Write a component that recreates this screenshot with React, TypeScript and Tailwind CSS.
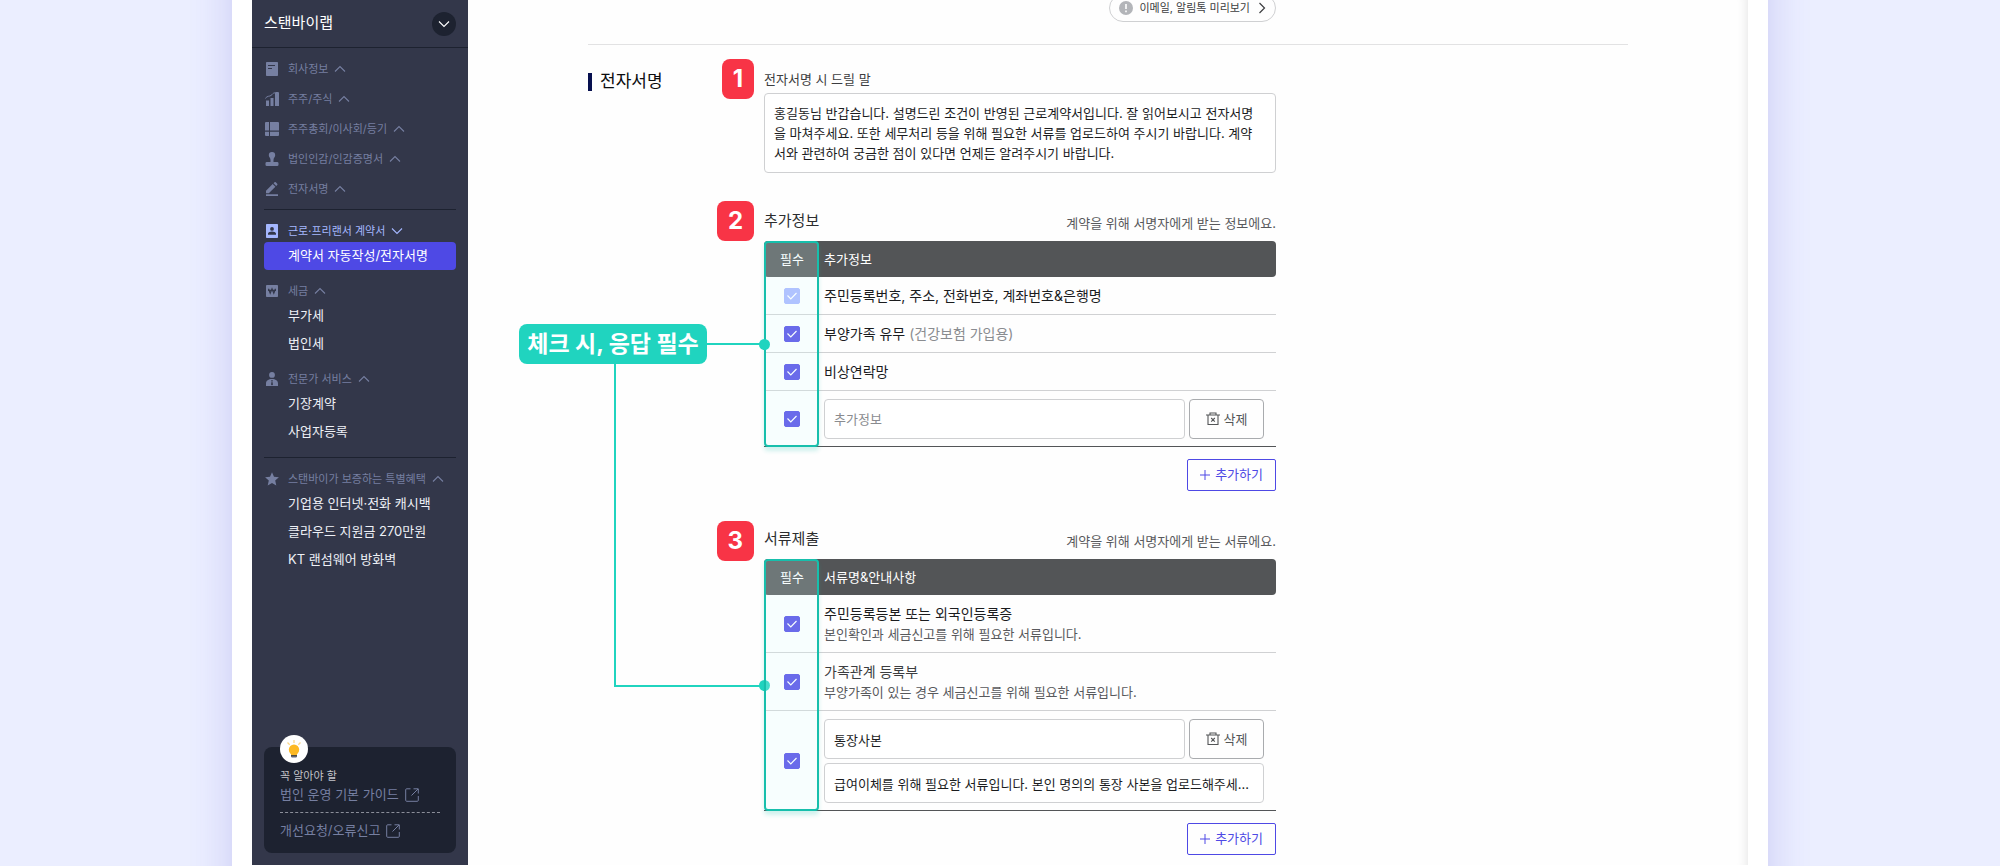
import { useState, type ReactNode } from "react"

function Chevron({ up = false }: { up?: boolean }) {
  return (
    <svg className="h-2 w-3 shrink-0" viewBox="0 0 12 8" fill="none" stroke="currentColor" strokeWidth={1.1} aria-hidden="true">
      <path d={up ? "M1 6.5 6 1.5 11 6.5" : "M1 1.5 6 6.5 11 1.5"} />
    </svg>
  )
}

function MenuIcon({ children }: { children: ReactNode }) {
  return (
    <svg className="h-3.5 w-3.5 shrink-0" viewBox="0 0 14 14" fill="currentColor" aria-hidden="true">
      {children}
    </svg>
  )
}

const icons = {
  company: <path fillRule="evenodd" d="M1.8 0h10.4a.8.8 0 0 1 .8.8v12.4a.8.8 0 0 1-.8.8H1.8a.8.8 0 0 1-.8-.8V.8a.8.8 0 0 1 .8-.8ZM3 3v1.1h7V3H3Zm0 3v1.1h4V6H3Z" />,
  stock: (
    <>
      <path d="M1 8.5h3V14H1zM5.5 6h3v8h-3zM10 1a1 1 0 0 1 1-1h2a1 1 0 0 1 1 1v13h-4z" />
      <path d="M.3 6.4C2.5 3.5 4.5 4.6 6 3.5S7.7 1 10 .8" fill="none" stroke="currentColor" />
    </>
  ),
  meeting: <path d="M1 0h3v8.5H0V1a1 1 0 0 1 1-1ZM5 0h8a1 1 0 0 1 1 1v7.5H5zM0 9.7h4V14H1a1 1 0 0 1-1-1zM5 9.700h9V13a1 1 0 0 1-1 1H5z" />,
  stamp: <path d="M7 0a3.2 3.2 0 0 1 3.2 3.2c0 1.9-1.7 2.5-1.7 4.8V10h3.700a1.300 1.300 0 0 1 1.300 1.300v1.400a1.300 1.300 0 0 1-1.300 1.300H1.800a1.300 1.300 0 0 1-1.300-1.300v-1.400A1.300 1.300 0 0 1 1.800 10h3.700V8c0-2.300-1.700-2.900-1.700-4.800A3.200 3.200 0 0 1 7 0Z" />,
  sign: <path d="M1 12.200h12V14H1zM1 8.700 7.700 2l2.700 2.700-6.600 6.600H1zM8.500 1.200 9.500.3a1 1 0 0 1 1.300 0l1.400 1.400a1 1 0 0 1 0 1.300l-1 .9z" />,
  contract: <path fillRule="evenodd" d="M1.800 0h10.400a.8.8 0 0 1 .8.8v12.400a.8.8 0 0 1-.8.8H1.800a.8.8 0 0 1-.8-.8V.8a.8.8 0 0 1 .8-.8ZM7 3a1.900 1.900 0 1 0 0 3.800A1.900 1.900 0 0 0 7 3ZM3 10.800h8V9.600c0-1.300-2.200-2.200-4-2.200s-4 .9-4 2.200z" />,
  tax: (
    <>
      <rect x="1" y="1" width="12" height="12" rx=".8" />
      <path d="m3.500 4.700 1.700 4.500L7 4.900l1.800 4.300 1.700-4.500M3 6.400h8" fill="none" stroke="#33374a" strokeWidth="1.2" />
    </>
  ),
  expert: <path fillRule="evenodd" d="M7 0a2.900 2.900 0 1 1 0 5.800A2.900 2.900 0 0 1 7 0ZM1 14v-2.500C1 8.500 3.500 7 7 7s6 1.500 6 4.500V14zm5.200-6 .5 1.300L6 12.500l1 1 1-1-.7-3.200.5-1.300z" />,
  star: <path d="m7 .3 2 4.500 4.900.5-3.700 3.300 1.100 4.900L7 11l-4.300 2.500 1.100-4.900L.1 5.300 5 4.800z" />,
}

function MenuHeading({ icon, active = false, children }: { icon: keyof typeof icons; active?: boolean; children: ReactNode }) {
  return (
    <button
      type="button"
      className={
        active
          ? "flex h-[22px] w-full items-center text-[11px] text-[#a5b7ff]"
          : "flex h-[22px] w-full items-center text-[11px] text-[#767fa1]"
      }
    >
      <span className="mr-2 ml-px flex">
        <MenuIcon>{icons[icon]}</MenuIcon>
      </span>
      <span className="mr-1.5 ml-px whitespace-nowrap">{children}</span>
      <Chevron up={!active} />
    </button>
  )
}

function MenuItem({ active = false, children }: { active?: boolean; children: ReactNode }) {
  return (
    <a
      href="#"
      className={
        active
          ? "flex h-7 items-center rounded bg-[#4e49e5] pl-6 text-[13px] whitespace-nowrap text-white"
          : "flex h-7 items-center rounded pl-6 text-[13px] whitespace-nowrap text-[#eef0f6]"
      }
    >
      {children}
    </a>
  )
}

function ExternalIcon() {
  return (
    <svg className="h-3.5 w-3.5" viewBox="0 0 14 14" fill="none" stroke="currentColor" aria-hidden="true">
      <path d="M5.500.8H1.700a1 1 0 0 0-1 1v10.500a1 1 0 0 0 1 1h10.600a1 1 0 0 0 1-1V8M8.500.8h4.800v4.700M13 1 6.500 7.500" />
    </svg>
  )
}

function Sidebar() {
  return (
    <aside className="flex w-[216px] shrink-0 flex-col bg-[#33374a]">
      <div className="flex h-12 items-center justify-between border-b border-[#1d2230] px-3">
        <strong className="text-[15px] font-normal text-white">스탠바이랩</strong>
        <button type="button" aria-label="회사 선택" className="flex h-6 w-6 items-center justify-center rounded-full bg-[#1d2230] text-white">
          <Chevron />
        </button>
      </div>

      <nav className="px-3 pt-2.5">
        <div className="space-y-2 border-b border-[#1d2230] pb-[9px]">
          <MenuHeading icon="company">회사정보</MenuHeading>
          <MenuHeading icon="stock">주주/주식</MenuHeading>
          <MenuHeading icon="meeting">주주총회/이사회/등기</MenuHeading>
          <MenuHeading icon="stamp">법인인감/인감증명서</MenuHeading>
          <MenuHeading icon="sign">전자서명</MenuHeading>
        </div>
        <div className="space-y-2.5 border-b border-[#1d2230] pt-2.5 pb-[11px]">
          <div>
            <MenuHeading icon="contract" active>근로·프리랜서 계약서</MenuHeading>
            <MenuItem active>계약서 자동작성/전자서명</MenuItem>
          </div>
          <div>
            <MenuHeading icon="tax">세금</MenuHeading>
            <MenuItem>부가세</MenuItem>
            <MenuItem>법인세</MenuItem>
          </div>
          <div>
            <MenuHeading icon="expert">전문가 서비스</MenuHeading>
            <MenuItem>기장계약</MenuItem>
            <MenuItem>사업자등록</MenuItem>
          </div>
        </div>
        <div className="pt-2.5">
          <MenuHeading icon="star">스탠바이가 보증하는 특별혜택</MenuHeading>
          <MenuItem>기업용 인터넷·전화 캐시백</MenuItem>
          <MenuItem>클라우드 지원금 270만원</MenuItem>
          <MenuItem>KT 랜섬웨어 방화벽</MenuItem>
        </div>
      </nav>

      {/* Guide box */}
      <div className="relative mx-3 mt-auto mb-3 rounded-lg bg-[#1d2230] px-4 pt-[21px] pb-2.5 text-[13px] text-[#767fa1]">
        <span className="absolute -top-3 left-4 flex h-7 w-7 items-center justify-center rounded-full bg-white">
          <svg className="h-5 w-4" viewBox="0 0 16 20" aria-hidden="true">
            <g stroke="#fbd78a" strokeWidth="1.3">
              <path d="M8 1v3M1.500 3.500l2.200 2.200M14.500 3.500l-2.200 2.200" />
            </g>
            <circle cx="8" cy="10.8" r="5.2" fill="#fdb924" />
            <path d="M5 14h6v2.500H5z" fill="#fdb924" />
            <path d="M5 16.200h6v1.500H5z" fill="#23262f" />
            <path d="M5.500 18.200h5v.8h-5z" fill="#9a9cb5" />
          </svg>
        </span>
        <p className="text-[11px] leading-4 text-[#c3c4c9]">꼭 알아야 할</p>
        <a href="#" className="flex h-[22px] items-center gap-1.5">
          법인 운영 기본 가이드 <ExternalIcon />
        </a>
        <hr className="my-1.5 border-dashed border-[#8b8e99]" />
        <a href="#" className="flex h-6 items-center gap-1.5">
          개선요청/오류신고 <ExternalIcon />
        </a>
      </div>
    </aside>
  )
}

function StepBadge({ children }: { children: ReactNode }) {
  return (
    <span className="flex h-10 items-center rounded-lg bg-[#f83446] px-[11px] text-2xl font-bold text-white">{children}</span>
  )
}

function CheckBox({ label, disabled = false }: { label: string; disabled?: boolean }) {
  return (
    <span className="mx-auto grid h-4 w-4">
      <input
        type="checkbox"
        defaultChecked
        disabled={disabled}
        aria-label={label}
        className="peer col-start-1 row-start-1 h-4 w-4 appearance-none rounded-[2px] border border-[#4e46e5] checked:bg-[#4e46e5] disabled:border-[#a5b4ff] disabled:bg-[#a5b4ff]"
      />
      <svg className="pointer-events-none invisible col-start-1 row-start-1 h-4 w-4 peer-checked:visible" viewBox="0 0 16 16" fill="none" stroke="white" strokeWidth={1.2} aria-hidden="true">
        <path d="m3.500 7.500 3.300 3.300 5.700-5.800" />
      </svg>
    </span>
  )
}

function CheckCell({ label, disabled, last = false }: { label: string; disabled?: boolean; last?: boolean }) {
  return (
    <td className={last ? "border-b border-[#535557]" : "border-b border-[#d0d1d3]"}>
      <CheckBox label={label} disabled={disabled} />
    </td>
  )
}

function TableHead({ title }: { title: string }) {
  return (
    <thead>
      <tr className="h-9 text-[13px] text-white">
        <th scope="col" className="w-14 rounded-l bg-[#535557] font-normal">필수</th>
        <th scope="col" className="rounded-r bg-[#535557] pl-1 text-left font-normal">{title}</th>
      </tr>
    </thead>
  )
}

/* Teal frame drawn over the "필수" column */
function ColumnHighlight() {
  return (
    <div className="pointer-events-none absolute inset-y-0 left-0 w-[55px] rounded border-2 border-[#17bfac] bg-[rgba(222,255,255,0.2)] shadow-[0_4px_4px_rgba(23,191,172,0.2)]" />
  )
}

function SectionHead({ id, title, note }: { id: string; title: string; note: string }) {
  return (
    <div className="mb-2 flex items-end justify-between">
      <h3 id={id} className="text-[15px] leading-6 text-[#2c2d2f]">{title}</h3>
      <p className="text-[13px] leading-5 text-[#58595c]">{note}</p>
    </div>
  )
}

function DeleteButton() {
  return (
    <button type="button" className="flex h-10 w-[75px] shrink-0 items-center justify-center gap-1 rounded border border-[#a9abae] text-[13px] text-[#535557]">
      <svg className="h-3.5 w-3.5" viewBox="0 0 14 14" fill="none" stroke="currentColor" strokeWidth={1.1} aria-hidden="true">
        <path d="M0 3h14M4 3V1h6v2M2 3v9.500h10V3M5.200 6l3.600 3.600M8.800 6l-3.600 3.600" />
      </svg>
      삭제
    </button>
  )
}

function AddButton() {
  return (
    <button type="button" className="mt-3 ml-auto flex h-8 items-center gap-[5px] rounded-[2px] border border-[#4e49e5] px-3 text-[13px] text-[#4e49e5]">
      <svg className="h-2.5 w-2.5" viewBox="0 0 10 10" stroke="currentColor" strokeWidth={1} aria-hidden="true">
        <path d="M5 0v10M0 5h10" />
      </svg>
      추가하기
    </button>
  )
}

function Callout() {
  return (
    <div className="absolute top-[83px] right-full flex items-center">
      <p className="flex h-10 w-[188px] items-center justify-center rounded-lg bg-[#20d4bf] text-[23px] font-bold whitespace-nowrap text-white">체크 시, 응답 필수</p>
      <span className="h-0.5 w-[57px] bg-[#20d4bf]" />
      <span className="absolute -right-1.5 h-[11px] w-[11px] rounded-full bg-[#20d4bf]" />
      <div className="absolute top-10 right-0 left-[95px] h-[323px] border-b-2 border-l-2 border-[#20d4bf]">
        <span className="absolute -right-1.5 -bottom-1.5 h-[11px] w-[11px] rounded-full bg-[#20d4bf]" />
      </div>
    </div>
  )
}

const fieldClass = "h-10 min-w-0 rounded border border-[#cfd0d2] bg-white px-[9px] text-[13px] text-[#1b1c1e] placeholder:text-[#8a8c90] text-ellipsis"

export default function App() {
  const [message, setMessage] = useState(
    "홍길동님 반갑습니다. 설명드린 조건이 반영된 근로계약서입니다. 잘 읽어보시고 전자서명을 마쳐주세요. 또한 세무처리 등을 위해 필요한 서류를 업로드하여 주시기 바랍니다. 계약서와 관련하여 궁금한 점이 있다면 언제든 알려주시기 바랍니다."
  )

  return (
    <div className="flex min-h-screen flex-col overflow-hidden bg-[#ebeeff] font-['Inter','Noto_Sans_CJK_KR',sans-serif]">
      <div className="mx-auto -my-20 w-full max-w-[1536px] flex-1 bg-white px-5 py-20 shadow-[0_0_40px_rgba(70,60,200,0.2)]">
        <div className="flex">
          <Sidebar />

          <main className="min-w-0 flex-1 bg-[#fefefe] px-[120px] pb-2.5 shadow-[inset_-12px_0_12px_-12px_rgba(0,0,0,0.12)]">
            <div className="-mt-1.5 flex border-b border-[#e2e2e3] pb-[22px] pl-44">
              <div className="flex w-full max-w-[512px] justify-end">
                <button type="button" className="flex h-7 items-center rounded-full border border-[#cfd0d2] px-[9px] text-[11px] text-[#3c3d40]">
                  <svg className="mr-1.5 h-3.5 w-3.5" viewBox="0 0 14 14" aria-hidden="true">
                    <circle cx="7" cy="7" r="7" fill="#b3b5b9" />
                    <path d="M7 3v5M7 9.500v1.700" stroke="white" strokeWidth="1.6" />
                  </svg>
                  이메일, 알림톡 미리보기
                  <svg className="ml-2 h-3 w-2" viewBox="0 0 8 12" fill="none" stroke="currentColor" strokeWidth={1.2} aria-hidden="true">
                    <path d="m1.500 1 5 5-5 5" />
                  </svg>
                </button>
              </div>
            </div>

            <div className="flex">
              <div className="w-44 shrink-0 pt-7">
                <h2 className="flex h-[18px] items-center border-l-4 border-[#07104f] pl-2 text-[17px] text-[#0c0d0f]">전자서명</h2>
              </div>

              <div className="w-full max-w-[512px] pt-6">
                {/* Message */}
                <section className="relative">
                  <div className="absolute -top-2.5 right-full mr-2.5">
                    <StepBadge>1</StepBadge>
                  </div>
                  <label htmlFor="message" className="block text-[13px] leading-5 text-[#3c3d40]">전자서명 시 드릴 말</label>
                  <textarea
                    id="message"
                    value={message}
                    onChange={(e) => setMessage(e.target.value)}
                    className="mt-1 block h-20 w-full resize-none overflow-hidden rounded border border-[#cfd0d2] bg-white py-[9px] pr-4 pl-[9px] text-[13px] leading-5 break-all text-[#1b1c1e]"
                  />
                </section>

                {/* Extra info */}
                <section className="relative mt-9">
                  <div className="absolute -top-2 right-full mr-2.5">
                    <StepBadge>2</StepBadge>
                  </div>
                  <SectionHead id="info-title" title="추가정보" note="계약을 위해 서명자에게 받는 정보에요." />
                  <div className="relative">
                    <table aria-labelledby="info-title" className="w-full border-separate border-spacing-0 text-sm text-[#1b1c1e]">
                      <TableHead title="추가정보" />
                      <tbody>
                        <tr className="h-[38px]">
                          <CheckCell label="주민등록번호, 주소, 전화번호, 계좌번호&은행명 필수" disabled />
                          <td className="border-b border-[#d0d1d3] pl-1">주민등록번호, 주소, 전화번호, 계좌번호&amp;은행명</td>
                        </tr>
                        <tr className="h-[38px]">
                          <CheckCell label="부양가족 유무 필수" />
                          <td className="border-b border-[#d0d1d3] pl-1">
                            부양가족 유무 <span className="text-[#8a8c90]">(건강보험 가입용)</span>
                          </td>
                        </tr>
                        <tr className="h-[38px]">
                          <CheckCell label="비상연락망 필수" />
                          <td className="border-b border-[#d0d1d3] pl-1">비상연락망</td>
                        </tr>
                        <tr>
                          <CheckCell label="추가정보 필수" last />
                          <td className="border-b border-[#535557] pt-2 pr-3 pb-[7px] pl-1">
                            <div className="flex gap-1">
                              <input type="text" aria-label="추가정보" placeholder="추가정보" className={`${fieldClass} flex-1`} />
                              <DeleteButton />
                            </div>
                          </td>
                        </tr>
                      </tbody>
                    </table>
                    <ColumnHighlight />
                    <Callout />
                  </div>
                  <AddButton />
                </section>

                {/* Documents */}
                <section className="relative mt-9">
                  <div className="absolute -top-1.5 right-full mr-2.5">
                    <StepBadge>3</StepBadge>
                  </div>
                  <SectionHead id="docs-title" title="서류제출" note="계약을 위해 서명자에게 받는 서류에요." />
                  <div className="relative">
                    <table aria-labelledby="docs-title" className="w-full border-separate border-spacing-0 text-sm text-[#1b1c1e]">
                      <TableHead title="서류명&안내사항" />
                      <tbody>
                        <tr className="h-[58px]">
                          <CheckCell label="주민등록등본 또는 외국인등록증 필수" />
                          <td className="border-b border-[#d0d1d3] pl-1">
                            <p className="leading-[21px]">주민등록등본 또는 외국인등록증</p>
                            <p className="text-[13px] leading-[21px] text-[#58595c]">본인확인과 세금신고를 위해 필요한 서류입니다.</p>
                          </td>
                        </tr>
                        <tr className="h-[58px]">
                          <CheckCell label="가족관계 등록부 필수" />
                          <td className="border-b border-[#d0d1d3] pl-1">
                            <p className="leading-[21px] text-[#3c3d40]">가족관계 등록부</p>
                            <p className="text-[13px] leading-[21px] text-[#58595c]">부양가족이 있는 경우 세금신고를 위해 필요한 서류입니다.</p>
                          </td>
                        </tr>
                        <tr>
                          <CheckCell label="통장사본 필수" last />
                          <td className="border-b border-[#535557] pt-2 pr-3 pb-[7px] pl-1">
                            <div className="flex gap-1">
                              <input type="text" aria-label="서류명" defaultValue="통장사본" className={`${fieldClass} flex-1`} />
                              <DeleteButton />
                            </div>
                            <input
                              type="text"
                              aria-label="안내사항"
                              defaultValue="급여이체를 위해 필요한 서류입니다. 본인 명의의 통장 사본을 업로드해주세요. 감사합니다."
                              className={`${fieldClass} mt-1 block w-full`}
                            />
                          </td>
                        </tr>
                      </tbody>
                    </table>
                    <ColumnHighlight />
                  </div>
                  <AddButton />
                </section>
              </div>
            </div>
          </main>
        </div>
      </div>
    </div>
  )
}
